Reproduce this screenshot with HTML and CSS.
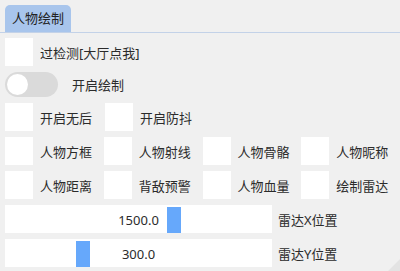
FILE: index.html
```html
<!DOCTYPE html>
<html lang="zh">
<head>
    <meta charset="UTF-8">
    <title>人物绘制</title>
    <link rel="stylesheet" href="styles.css">
</head>
<body>
    <div class="window">
        <div class="tab-bar">
            <div class="tab">人物绘制</div>
        </div>

        <div class="content">
            <div class="row">
                <div class="item">
                    <span class="check"></span>
                    <span class="label">过检测[大厅点我]</span>
                </div>
            </div>

            <div class="row toggle-row">
                <span class="toggle"><span class="knob"></span></span>
                <span class="label toggle-label">开启绘制</span>
            </div>

            <div class="row">
                <div class="item"><span class="check"></span><span class="label">开启无后</span></div>
                <div class="item"><span class="check"></span><span class="label">开启防抖</span></div>
            </div>

            <div class="row">
                <div class="item"><span class="check"></span><span class="label">人物方框</span></div>
                <div class="item"><span class="check"></span><span class="label">人物射线</span></div>
                <div class="item"><span class="check"></span><span class="label">人物骨骼</span></div>
                <div class="item"><span class="check"></span><span class="label">人物昵称</span></div>
            </div>

            <div class="row">
                <div class="item"><span class="check"></span><span class="label">人物距离</span></div>
                <div class="item"><span class="check"></span><span class="label">背敌预警</span></div>
                <div class="item"><span class="check"></span><span class="label">人物血量</span></div>
                <div class="item"><span class="check"></span><span class="label">绘制雷达</span></div>
            </div>

            <div class="row">
                <div class="slider">
                    <span class="grab" style="left: 162px"></span>
                    <span class="value">1500.0</span>
                </div>
                <span class="label slider-label">雷达X位置</span>
            </div>

            <div class="row">
                <div class="slider">
                    <span class="grab" style="left: 71px"></span>
                    <span class="value">300.0</span>
                </div>
                <span class="label slider-label">雷达Y位置</span>
            </div>
        </div>

        <div class="grip"></div>
    </div>
</body>
</html>
```

FILE: styles.css
```css
html, body {
    margin: 0;
    padding: 0;
    height: 100%;
}

body {
    font-family: "Noto Sans", "Noto Sans CJK SC", sans-serif;
    font-size: 13px;
    color: #2b2b2b;
    background-color: #f0f0f0;
    overflow: hidden;
}

.window {
    position: relative;
    height: 271px;
    padding: 5px 0 0 5px;
    box-sizing: border-box;
}

.tab-bar {
    display: flex;
    height: 27px;
    margin-left: -5px;
    padding-left: 5px;
    border-bottom: 1px solid #c3d2e8;
}

.tab {
    width: 66px;
    height: 27px;
    background-color: #a8c5ec;
    border-radius: 5px 5px 0 0;
    display: flex;
    align-items: center;
    justify-content: center;
    font-size: 13px;
    line-height: 1;
    color: #222;
}

.content {
    display: flex;
    flex-direction: column;
    gap: 6px;
    padding-top: 5px;
}

.row {
    display: flex;
    height: 28px;
    align-items: center;
}

.item {
    width: 100px;
    display: flex;
    align-items: center;
    height: 28px;
}

.check {
    width: 28px;
    height: 28px;
    background-color: #ffffff;
    flex-shrink: 0;
}

.label {
    margin-left: 7px;
    padding-top: 2px;
    white-space: nowrap;
    line-height: 1;
}

.toggle-row {
    height: 25px;
}

.toggle {
    position: relative;
    width: 53px;
    height: 25px;
    border-radius: 13px;
    background-color: #dadada;
}

.knob {
    position: absolute;
    left: 2px;
    top: 2px;
    width: 21px;
    height: 21px;
    border-radius: 50%;
    background-color: #ffffff;
}

.toggle-label {
    margin-left: 14px;
}

.slider {
    position: relative;
    width: 267px;
    height: 28px;
    background-color: #ffffff;
    display: flex;
    align-items: center;
    justify-content: center;
}

.grab {
    position: absolute;
    top: 2px;
    width: 14px;
    height: 26px;
    background-color: #66a8fb;
}

.value {
    position: relative;
    padding-top: 2px;
    line-height: 1;
}

.slider-label {
    margin-left: 6px;
}

.grip {
    position: absolute;
    right: 0;
    bottom: 0;
    width: 0;
    height: 0;
    border-left: 12px solid transparent;
    border-bottom: 12px solid #e3e3e3;
}
```
